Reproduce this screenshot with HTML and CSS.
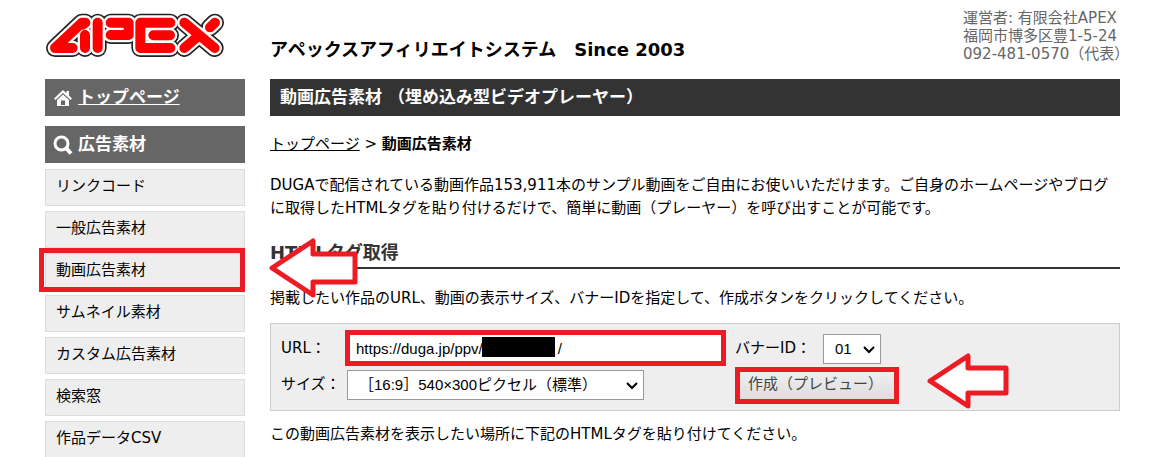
FILE: index.html
```html
<!DOCTYPE html>
<html lang="ja">
<head>
    <meta charset="UTF-8">
    <meta name="viewport" content="width=device-width, initial-scale=1.0">
    <title>動画広告素材</title>
    <link rel="stylesheet" href="styles.css">
</head>
<body>
    <header class="header">
        <a class="logo" href="#" aria-label="APEX">
            <svg viewBox="27 42 537 132" width="179" height="44" fill="none" stroke-linecap="round" stroke-linejoin="round">
                <defs>
                    <g id="logo-shape">
                        <path d="M148 71H138L57 147H110M148 71L140 77M147 108V147"/>
                        <path d="M185 71V147"/>
                        <path d="M224 71H278V108H224"/>
                        <path d="M403 71H313V147H403M352 109H402"/>
                        <path d="M445 71L536 147M445 147L480 117M522 85L537 71"/>
                    </g>
                </defs>
                <use href="#logo-shape" stroke="#222" stroke-width="54"/>
                <use href="#logo-shape" stroke="#fff" stroke-width="44"/>
                <use href="#logo-shape" stroke="#f00" stroke-width="30"/>
            </svg>
        </a>
        <h1>アペックスアフィリエイトシステム　Since 2003</h1>
        <address>
            運営者: 有限会社APEX<br>
            福岡市博多区豊1-5-24<br>
            092-481-0570（代表）
        </address>
    </header>

    <div class="container">
        <nav class="sidebar">
            <p class="side-title">
                <svg viewBox="0 0 20 20" width="20" height="20" fill="#fff">
                    <path d="M10 2L1 10.500L2.500 12L10 5L17.500 12L19 10.500L16 7.600V3H13.500V5.300Z"/>
                    <path fill-rule="evenodd" d="M10 6.500L4 12V18H16V12ZM8 12.500H12V17H8Z"/>
                </svg>
                <a href="#">トップページ</a>
            </p>
            <p class="side-title">
                <svg viewBox="0 0 20 20" width="20" height="20" fill="none" stroke="#fff">
                    <circle cx="8.500" cy="8.500" r="6.500" stroke-width="3"/>
                    <path d="M13 13L18 18.500" stroke-width="4"/>
                </svg>
                広告素材
            </p>
            <ul class="side-menu">
                <li><a href="#">リンクコード</a></li>
                <li><a href="#">一般広告素材</a></li>
                <li><a href="#">動画広告素材</a><span class="mark mark-menu"></span></li>
                <li><a href="#">サムネイル素材</a></li>
                <li><a href="#">カスタム広告素材</a></li>
                <li><a href="#">検索窓</a></li>
                <li><a href="#">作品データCSV</a></li>
            </ul>
        </nav>

        <main>
            <h2 class="page-title">動画広告素材 （埋め込み型ビデオプレーヤー）</h2>
            <p class="breadcrumb"><a href="#">トップページ</a> &gt; <strong>動画広告素材</strong></p>
            <p class="lead">DUGAで配信されている動画作品153,911本のサンプル動画をご自由にお使いいただけます。ご自身のホームページやブログに取得したHTMLタグを貼り付けるだけで、簡単に動画（プレーヤー）を呼び出すことが可能です。</p>

            <h3 class="section-title">
                HTMLタグ取得
                <svg class="arrow arrow-menu" viewBox="0 0 90 62" width="90" height="62">
                    <path d="M3 31L44 4V17H86V45H44V58Z"/>
                </svg>
            </h3>
            <p>掲載したい作品のURL、動画の表示サイズ、バナーIDを指定して、作成ボタンをクリックしてください。</p>

            <form class="tag-form">
                <label for="url">URL：</label>
                <div class="field field-url">
                    <input type="text" id="url" value="https://duga.jp/ppv/&nbsp;&nbsp;&nbsp;&nbsp;&nbsp;&nbsp;&nbsp;&nbsp;&nbsp;&nbsp;&nbsp;&nbsp;&nbsp;&nbsp;&nbsp;&nbsp;&nbsp;&nbsp;/">
                    <span class="mask"></span>
                    <span class="mark mark-url"></span>
                </div>
                <label for="banner">バナーID：</label>
                <div class="field field-banner">
                    <select id="banner">
                        <option>01</option>
                    </select>
                    <svg class="caret" viewBox="0 0 12 8" width="12" height="8"><path d="M1 1L6 6L11 1"/></svg>
                </div>
                <label for="size">サイズ：</label>
                <div class="field field-size">
                    <select id="size">
                        <option>［16:9］540×300ピクセル（標準）</option>
                    </select>
                    <svg class="caret" viewBox="0 0 12 8" width="12" height="8"><path d="M1 1L6 6L11 1"/></svg>
                </div>
                <div class="field field-submit">
                    <button type="button">作成（プレビュー）</button>
                    <span class="mark mark-submit"></span>
                </div>
                <svg class="arrow arrow-submit" viewBox="0 0 84 58" width="84" height="58">
                    <path d="M4 29L42 4V16H80V41H42V54Z"/>
                </svg>
            </form>
            <p>この動画広告素材を表示したい場所に下記のHTMLタグを貼り付けてください。</p>
        </main>
    </div>
</body>
</html>
```

FILE: styles.css
```css
* {
    box-sizing: border-box;
}

body {
    margin: 0;
    padding: 13px 39px 0 45px;
    background: #fff;
    color: #000;
    font-family: "DejaVu Sans", "Noto Sans CJK JP", sans-serif;
    font-size: 15px;
    line-height: 23px;
}

h1, h2, h3, p, ul {
    margin: 0;
    padding: 0;
}

a {
    color: inherit;
}

.header {
    display: flex;
    height: 66px;
}

.logo {
    width: 225px;
}

.logo svg {
    display: block;
}

.header h1 {
    flex: 1;
    padding-top: 25px;
    font-size: 18px;
    white-space: nowrap;
}

.header address {
    width: 157px;
    margin-top: -4px;
    color: #666;
    font-style: normal;
    line-height: 18px;
    white-space: nowrap;
}

.container {
    display: flex;
    gap: 25px;
}

/* サイドメニュー */
.sidebar {
    flex: 0 0 200px;
}

.side-title {
    display: flex;
    align-items: center;
    gap: 5px;
    height: 37px;
    margin-bottom: 10px;
    padding: 0 8px;
    background: #666;
    color: #fff;
    font-size: 17px;
    font-weight: bold;
}

.side-menu {
    display: flex;
    flex-direction: column;
    gap: 5px;
    margin-top: -4px;
    list-style: none;
}

.side-menu li {
    position: relative;
}

.side-menu a {
    display: block;
    padding: 5px 10px 7px;
    border: 1px solid #ddd;
    background: #eee;
    text-decoration: none;
}

/* メイン */
main {
    flex: 1;
    min-width: 0;
}

.page-title {
    padding: 7px 10px;
    background: #333;
    color: #fff;
    font-size: 17px;
}

.breadcrumb {
    margin-top: 17px;
}

.lead {
    margin-top: 18px;
}

.section-title {
    position: relative;
    margin: 21px 0 18px;
    padding-bottom: 3px;
    border-bottom: 2px solid #333;
    color: #333;
    font-size: 18px;
}

.tag-form {
    position: relative;
    display: grid;
    grid-template-columns: 66px minmax(0, 388px) 88px auto;
    grid-auto-rows: 30px;
    justify-content: start;
    row-gap: 6px;
    margin: 13px 0 12px;
    padding: 10px;
    border: 1px solid #ccc;
    background: #eee;
}

.tag-form label {
    padding-top: 3px;
}

.field {
    position: relative;
    justify-self: start;
}

.field input,
.field select {
    display: block;
    width: 100%;
    height: 30px;
    margin: 0;
    border: 1px solid #999;
    border-radius: 0;
    background: #fff;
    color: #000;
    font-family: "Liberation Sans", "Noto Sans CJK JP", sans-serif;
    font-size: 15px;
}

.field input {
    padding: 0 8px 2px;
}

.field select {
    appearance: none;
    padding: 0 11px 1px;
}

.field-url {
    width: 377px;
    max-width: 100%;
}

.field-size {
    width: 297px;
    max-width: 100%;
}

.field-banner {
    width: 58px;
}

.field-submit {
    grid-column: 3 / 5;
    width: 164px;
}

.field-submit button {
    display: block;
    width: 100%;
    height: 30px;
    padding: 0 13px 2px;
    border: 0;
    background: linear-gradient(#f0f0f0, #ddd);
    color: #444;
    font: inherit;
    text-align: left;
}

.caret {
    position: absolute;
    top: 12px;
    right: 6px;
    fill: none;
    stroke: #000;
    stroke-width: 2;
    pointer-events: none;
}

/* 赤枠と矢印 */
.mark {
    position: absolute;
    border: 5px solid #ed1c24;
    pointer-events: none;
}

.mark-menu {
    inset: -5px 0 -2px -6px;
}

.mark-url {
    inset: -4px -2px -2px;
}

.mark-submit {
    inset: -3px 0 -4px;
}

.mask {
    position: absolute;
    top: 3px;
    left: 135px;
    width: 73px;
    height: 20px;
    background: #000;
}

.arrow {
    position: absolute;
    fill: #fff;
    stroke: #ed1c24;
    stroke-width: 5;
    stroke-linejoin: round;
}

.arrow-menu {
    top: -4px;
    left: -1px;
}

.arrow-submit {
    top: 28px;
    left: 655px;
}
```
